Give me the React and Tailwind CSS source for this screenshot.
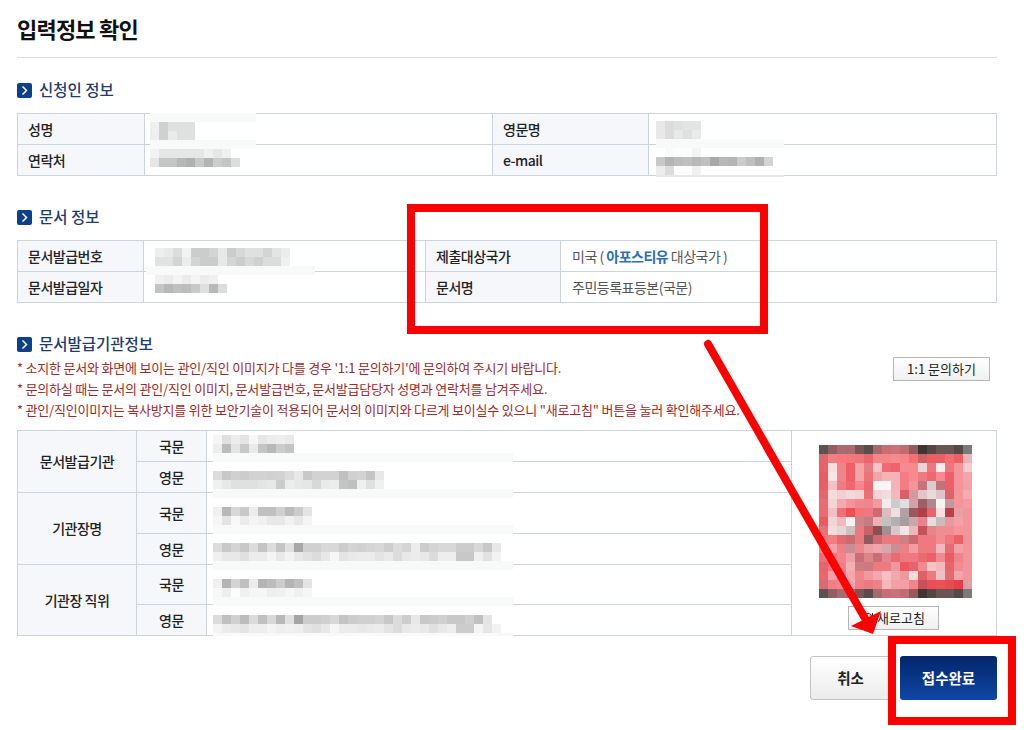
import { RefreshCw } from 'lucide-react';

const thCls = 'border border-[#ccd3da] bg-[#f5f7fb] text-left font-medium text-[#222] pl-[10px]';
const tdCls = 'border border-[#ccd3da] p-0 align-top';
const subTh = 'border border-[#ccd3da] bg-[#f5f7fb] text-center font-medium text-[#222]';

// mosaic blocks that hide personal data, each value is one gray level
function Pixels({ rows }) {
  return (
    <div>
      {rows.map((row, i) => (
        <div key={i} className="flex">
          {row.split(' ').map((v, j) => (
            <div key={j} className="w-[9px] h-[9px]" style={{ backgroundColor: `#${v}${v}${v}` }} />
          ))}
        </div>
      ))}
    </div>
  );
}

// pale smear left around the mosaic, it runs over the table lines
function Band({ className }) {
  return <div className={`absolute bg-[#f8f9f9] ${className}`} />;
}

const stampColors = [
  '5c5350 8f5f62 a86b6e a86a6c 7a5556 5a4c4c a5696e c96e72 c87377 c26c70 955a5e 3f3533 544547 6b5453 6a5554 554948 7a7a7a',
  'e0666c f27d83 f5797f f5767c f0747a ee646c f5868c f5868c f58a90 f5858b f46e75 d05f64 ec5e64 ec5f66 ee6e74 ee5f68 ecb4b8',
  'eb6068 f8dede ef8489 ee5e65 f2a4a6 e57d83 f4c4c8 ef6a72 ef646c f58a90 f58a90 ebd4d6 f0757c f8ecec f2747c f4959c f4ccd0',
  'ea5b63 f8e6e6 ef8489 ef5f67 f2a4a6 ec737a f2a4a8 f2b4b6 f2b4b6 f27d83 f58a90 ec7a80 f0686f f58a90 ee5f69 f4959c f4a4aa',
  'e85f67 f4c0c4 ee7d83 f0686f f2888e ec6a72 fbf4f4 fbf6f6 f2b4b6 f27d83 f4959a c8737a d4d0d0 c2737a ee5f69 f4959c f4a0a6',
  'e8656d f3dcdc f2d0d2 f3dada f2d4d4 ec6f76 f3d4d6 f3dcdc f4b8bc dc5f68 d09a9e e4c4c8 ead8da dcc4c8 dc626b f4959c f8aab0',
  'ea6b72 f3d4d6 f2a8ac f4959a f08a90 f0858b f29a9e f2ecec cdcccc e0dede d2a2a6 9e5f66 ae888c f8f2f2 c4989c f4959c f49ca2',
  'ea6b72 f2c0c4 ee6f76 f04e56 f5747a ee7980 cc6a70 dcbcc0 f0dee0 b2a2a4 985a60 b04048 e4656c f8e0e4 bc4048 e8a0a8 f4959c',
  'ee5a62 f3d4d6 f2b8bc f8f0f0 cf8488 c07f82 f0b0b4 c2c0c0 b4b0b0 a89ea0 c8a8aa f08088 e4e0e0 ccbcbc ea989e f4a0a6 f4959c',
  'e67278 f3dcdc e4d6d6 ccc0c0 ea7a80 cc6268 8a5054 9e9292 d8c8cc f4e4e4 ecb8bc c85058 e2868c f08c92 f08c92 f4959c f4959c',
  'ee7a80 f27d83 e26a70 cc6a70 e87980 8e5a5e cc6a70 e87980 f0757c cc8084 c86a70 ee7980 ee7980 f08c92 ec7980 ee5f68 f4959c',
  'f0858b f4a0a6 f08088 c89094 ee868c e8a0a4 f0a4a8 d4a8ac c89094 f08088 f09ca0 ee7980 ee7980 eeb8bc e86a72 f0a0a6 f4959c',
  'ec7078 ee7a80 f0858b eea0a6 c87078 dc8488 c87078 e2868c ec6a72 ee7980 ee7980 ec6a72 ec6068 ee8a90 e85c66 ee858b f4959c',
  'e8646c ee7a80 f08088 f2b0b4 cc7c82 cc7a80 ee7a80 ee7a80 ec989e ec5660 e8646c ee8a90 f2c4c8 f2b8bc e8646c f08c92 f4959c',
  'e8686e f4a0a6 f08088 f2a8ac f0858b ee9a9e f2a8ac f4c0c4 f2a8ac ee9a9e f8dada e0606a ee7980 f2c0c4 e46a72 f4a4aa f4959c',
  'd86c72 f08088 f4848a f2a8ac f08088 ee7a80 f08088 f4b8bc f2a0a6 f2a0a6 f0858b c8505a ec4e58 ee5058 ea4a52 e83e4a e0a0a6',
  '5c5350 8f5f62 a86b6e a86a6c 7a5556 5a4c4c a5696e c96e72 c87377 c26c70 955a5e 3f3533 544547 6b5453 6a5554 554948 7a7a7a',
];

function Stamp() {
  return (
    <div className="w-[153px] ml-[27px]">
      {stampColors.map((row, i) => (
        <div key={i} className="flex">
          {row.split(' ').map((c, j) => (
            <div key={j} className="w-[9px] h-[9px]" style={{ backgroundColor: `#${c}` }} />
          ))}
        </div>
      ))}
    </div>
  );
}

function SectionTitle({ children }) {
  return (
    <div className="flex items-center gap-[7px] h-[20px]">
      <span className="w-[15px] h-[15px] rounded-[2px] bg-[#0d3f8a] flex items-center justify-center">
        <svg width="9" height="11" viewBox="0 0 9 11" fill="none">
          <path d="M2.5 1.5 L6.5 5.5 L2.5 9.5" stroke="#fff" strokeWidth="1.5" />
        </svg>
      </span>
      <h2 className="-mt-[2px] text-[15.5px] font-medium text-[#1f3b70] leading-[20px] tracking-normal">{children}</h2>
    </div>
  );
}

export default function App() {
  return (
    <div
      className="relative w-[1031px] h-[730px] overflow-hidden bg-white pl-[17px] pr-[34px] text-[14px] text-[#555] tracking-[-0.5px]"
      style={{ fontFamily: '"Noto Sans CJK KR", "Noto Sans", sans-serif' }}
    >
      <div className="h-[58px] border-b border-[#d8dbdf] pt-[11px]">
        <h1 className="text-[22px] font-bold leading-[34px] text-[#111] tracking-[-0.8px]">입력정보 확인</h1>
      </div>

      {/* 신청인 정보 */}
      <div className="mt-[22px]">
        <SectionTitle>신청인 정보</SectionTitle>
      </div>
      <table className="mt-[13px] w-[980px] table-fixed border-collapse">
        <colgroup>
          <col className="w-[127px]" />
          <col className="w-[348px]" />
          <col className="w-[156px]" />
          <col />
        </colgroup>
        <tbody>
          <tr className="h-[31px]">
            <th className={thCls}>성명</th>
            <td className={`${tdCls} pl-[5px] pt-[8px]`}>
              <div className="relative w-fit">
                <Band className="left-0 -top-[9px] w-[106px] h-[9px]" />
                <Pixels rows={['f0 d0 e0 e0 e0', 'ee d0 ea e0 e0']} />
                <Band className="left-0 top-full w-[106px] h-[9px]" />
              </div>
            </td>
            <th className={thCls}>영문명</th>
            <td className={`${tdCls} pl-[7px] pt-[7px]`}>
              <div className="relative w-fit">
                <Pixels rows={['e8 dc e0 e4 e4', 'e8 dc e8 e0 ea']} />
                <Band className="left-0 top-full w-[128px] h-[9px]" />
              </div>
            </td>
          </tr>
          <tr className="h-[31px]">
            <th className={thCls}>연락처</th>
            <td className={`${tdCls} pl-[5px] pt-[4px]`}>
              <Pixels rows={['f2 e6 e6 e6 e6 e6 f0 e6 f0 ff', 'e6 c4 c4 b8 b0 c8 b4 cc c4 dc']} />
            </td>
            <th className={thCls}>e-mail</th>
            <td className={`${tdCls} pl-[7px] pt-[3px]`}>
              <div className="relative w-fit">
                <Pixels
                  rows={[
                    'ff fa fc fc f4 ff ff ff ff ff ff ff ff',
                    'c8 b4 bc c0 b8 c0 a8 b8 b4 cc c0 b0 d4',
                    'ec dc fc fc f0 ff ff ff ff ff ff ff ff',
                  ]}
                />
                <div className="absolute left-0 top-full w-[128px] h-[2px] bg-[#e8e8e8]" />
              </div>
            </td>
          </tr>
        </tbody>
      </table>

      {/* 문서 정보 */}
      <div className="mt-[31px]">
        <SectionTitle>문서 정보</SectionTitle>
      </div>
      <table className="mt-[13px] w-[980px] table-fixed border-collapse">
        <colgroup>
          <col className="w-[126px]" />
          <col className="w-[282px]" />
          <col className="w-[135px]" />
          <col />
        </colgroup>
        <tbody>
          <tr className="h-[31px]">
            <th className={thCls}>문서발급번호</th>
            <td className={`${tdCls} pl-[11px] pt-[7px]`}>
              <div className="relative w-fit">
                <Pixels
                  rows={[
                    'ee e8 dc f2 cc cc d4 e8 cc d8 e0 e0 d4 e4 ec',
                    'e2 e2 d4 ec d4 cc cc e8 d4 cc d8 d0 dc dc f0',
                  ]}
                />
                <Band className="-left-[9px] top-full w-[169px] h-[9px]" />
              </div>
            </td>
            <th className={thCls}>제출대상국가</th>
            <td className={`${tdCls} align-middle! pl-[11px]`}>
              미국 ( <b className="font-bold text-[#2a6ebb]">아포스티유</b> 대상국가 )
            </td>
          </tr>
          <tr className="h-[31px]">
            <th className={thCls}>문서발급일자</th>
            <td className={`${tdCls} pl-[11px] pt-[3px]`}>
              <Pixels rows={['f0 ec f4 ec f4 ec f0 ff', 'c4 b8 c0 bc c8 e0 b8 dc']} />
            </td>
            <th className={thCls}>문서명</th>
            <td className={`${tdCls} align-middle! pl-[11px]`}>주민등록표등본(국문)</td>
          </tr>
        </tbody>
      </table>

      {/* 문서발급기관정보 */}
      <div className="mt-[31px]">
        <SectionTitle>문서발급기관정보</SectionTitle>
      </div>
      <div className="mt-[3px] flex justify-between items-start">
        <div className="text-[13px] leading-[21px] text-[#a02a2a] tracking-[-0.2px]">
          <p>* 소지한 문서와 화면에 보이는 관인/직인 이미지가 다를 경우 '1:1 문의하기'에 문의하여 주시기 바랍니다.</p>
          <p>* 문의하실 때는 문서의 관인/직인 이미지, 문서발급번호, 문서발급담당자 성명과 연락처를 남겨주세요.</p>
          <p>* 관인/직인이미지는 복사방지를 위한 보안기술이 적용되어 문서의 이미지와 다르게 보이실수 있으니 "새로고침" 버튼을 눌러 확인해주세요.</p>
        </div>
        <button className="mr-[7px] w-[97px] h-[24px] border border-[#b5b5b5] bg-gradient-to-b from-white to-[#f0f0f0] text-[13px] tracking-normal text-[#222]">
          1:1 문의하기
        </button>
      </div>

      <table className="mt-[10px] w-[980px] table-fixed border-collapse">
        <colgroup>
          <col className="w-[119px]" />
          <col className="w-[70px]" />
          <col className="w-[585px]" />
          <col />
        </colgroup>
        <tbody>
          <tr className="h-[31px]">
            <th rowSpan={2} className={subTh}>문서발급기관</th>
            <th className={subTh}>국문</th>
            <td className={`${tdCls} pl-[6px] pt-[4px]`}>
              <div className="relative w-fit">
                <Pixels rows={['f6 e0 ec e4 f6 e6 ec ee ea', 'ee bc e4 c8 ea c4 b8 cc c4']} />
                <Band className="left-0 top-full w-[300px] h-[9px]" />
              </div>
            </td>
            <td rowSpan={6} className={`${tdCls} pt-[14px]`}>
              <Stamp />
              <button className="mt-[8px] ml-[56px] flex items-center justify-center gap-[3px] w-[91px] h-[24px] border border-[#b5b5b5] bg-gradient-to-b from-white to-[#f0f0f0] text-[13px] tracking-normal text-[#222]">
                <RefreshCw className="w-[12px] h-[12px]" />
                새로고침
              </button>
            </td>
          </tr>
          <tr className="h-[31px]">
            <th className={subTh}>영문</th>
            <td className={`${tdCls} pl-[6px] pt-[9px]`}>
              <div className="relative w-fit">
                <Pixels
                  rows={[
                    'dc c8 d0 cc d2 d2 d0 d2 dc e8 c8 d2 d2 d2 c0 d0 d2 c4 e8',
                    'f0 e8 e0 e0 e0 e4 e8 cc ec e8 e6 d8 ea ec c4 c0 f0 e0 f0',
                  ]}
                />
                <Band className="left-0 top-full w-[300px] h-[9px]" />
              </div>
            </td>
          </tr>
          <tr className="h-[41px]">
            <th rowSpan={2} className={subTh}>기관장명</th>
            <th className={subTh}>국문</th>
            <td className={`${tdCls} pl-[6px] pt-[14px]`}>
              <div className="relative w-fit">
                <Pixels rows={['f0 b8 d8 c8 ec c0 c0 d0 bc cc e4', 'f6 e4 f8 ec f4 f0 e8 e8 f2 e8 f4']} />
                <Band className="left-0 top-full w-[300px] h-[9px]" />
              </div>
            </td>
          </tr>
          <tr className="h-[31px]">
            <th className={subTh}>영문</th>
            <td className={`${tdCls} pl-[6px] pt-[9px]`}>
              <div className="relative w-fit">
                <Pixels
                  rows={[
                    'dc c8 d4 c8 dc c4 dc c4 e0 a8 d0 d0 d8 d8 cc d4 d0 d4 d8 ce dc d4 ec cc d4 d8 d8 cc cc d8 c8 e8',
                    'f0 e8 e8 e0 ec ec f4 e8 f2 e8 e2 dc e8 f6 e4 e8 ec ec e4 ea dc e8 ec e8 dc ee ee c8 c8 f0 e2 f2',
                  ]}
                />
                <Band className="left-0 top-full w-[300px] h-[9px]" />
              </div>
            </td>
          </tr>
          <tr className="h-[40px]">
            <th rowSpan={2} className={subTh}>기관장 직위</th>
            <th className={subTh}>국문</th>
            <td className={`${tdCls} pl-[6px] pt-[14px]`}>
              <div className="relative w-fit">
                <Pixels rows={['f0 b4 d4 c0 ec b4 bc cc b4 c0 e4', 'f8 ee fc f0 f6 f6 ee f0 f6 f0 f6']} />
                <Band className="left-0 top-full w-[300px] h-[9px]" />
              </div>
            </td>
          </tr>
          <tr className="h-[31px]">
            <th className={subTh}>영문</th>
            <td className={`${tdCls} pl-[6px] pt-[10px]`}>
              <div className="relative w-fit">
                <Pixels
                  rows={[
                    'dc c0 d0 bc dc c0 d8 b8 e0 a4 cc cc d0 d8 c4 cc d0 d0 d4 c8 dc cc e8 c8 cc d0 c8 c8 d0 c0 e4',
                    'f4 ec e8 e4 ee ee f4 ee f0 ee e4 e0 e8 f6 ec ec e8 ea ec e4 dc e8 ec e8 e0 e8 ee cc cc f4 e6 f2',
                  ]}
                />
                <Band className="left-0 top-full w-[300px] h-[3px]" />
              </div>
            </td>
          </tr>
        </tbody>
      </table>

      <div className="mt-[20px] flex justify-end gap-[9px]">
        <button className="w-[81px] h-[44px] rounded-[3px] border border-[#c4c4c4] bg-gradient-to-b from-white to-[#ececec] text-[14.5px] tracking-normal font-bold text-[#222]">
          취소
        </button>
        <button className="w-[97px] h-[44px] rounded-[3px] bg-gradient-to-b from-[#04266b] to-[#0f47a8] text-[14.5px] tracking-normal font-bold text-white">
          접수완료
        </button>
      </div>

      {/* red marks drawn on top of the capture */}
      <div className="absolute left-[407px] top-[204px] w-[361px] h-[130px] border-[8px] border-[#ff0000]" />
      <div className="absolute left-[888px] top-[636px] w-[128px] h-[89px] border-[8px] border-[#ff0000]" />
      <svg className="absolute left-0 top-0" width="1031" height="730" fill="none">
        <line x1="708" y1="344" x2="866" y2="620" stroke="#ff0000" strokeWidth="8" strokeLinecap="round" />
        <polygon points="873,634 851,626 881,611" fill="#ff0000" />
      </svg>
    </div>
  );
}
